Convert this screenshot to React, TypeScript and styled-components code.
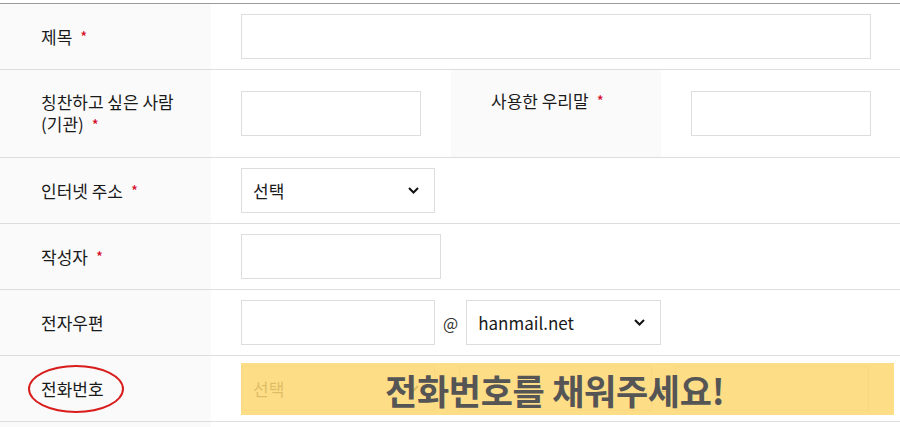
import styled, { createGlobalStyle } from "styled-components";

const GlobalStyle = createGlobalStyle`
  body {
    margin: 0;
    background: #ffffff;
    font-family: "Noto Sans CJK KR", "Noto Sans", sans-serif;
    color: #1a1a1a;
  }
`;

const Page = styled.div`
  padding-top: 3px;
  width: 900px;
  overflow: hidden;
`;

const Table = styled.div`
  border-top: 1px solid #9a9a9a;
`;

const Row = styled.div`
  display: flex;
  border-bottom: 1px solid #dddddd;
`;

const Label = styled.div<{ $w: number; $top?: boolean; $pl?: number }>`
  position: relative;
  box-sizing: border-box;
  width: ${(p) => p.$w}px;
  flex-shrink: 0;
  display: flex;
  align-items: ${(p) => (p.$top ? "flex-start" : "center")};
  padding: ${(p) => (p.$top ? "20px" : "21px")} 0 21px ${(p) => p.$pl ?? 41}px;
  background: #fafafa;
  font-size: 17px;
  line-height: 22px;
  color: #1a1a1a;
`;

const Req = styled.span`
  color: #d6001c;
  margin-left: 8px;
  font-size: 15px;
`;

const Cell = styled.div<{ $w?: number }>`
  position: relative;
  box-sizing: border-box;
  ${(p) => (p.$w ? `width: ${p.$w}px;` : "flex: 1;")}
  display: flex;
  align-items: center;
  padding: 10px 0 10px 30px;
`;

const TextInput = styled.input<{ $w: number }>`
  box-sizing: border-box;
  width: ${(p) => p.$w}px;
  height: 45px;
  border: 1px solid #dddddd;
  background: #ffffff;
  outline: none;
  padding: 0 12px;
  font-size: 16px;
`;

const SelectBox = styled.div<{ $w: number }>`
  box-sizing: border-box;
  width: ${(p) => p.$w}px;
  height: 45px;
  border: 1px solid #dddddd;
  background: #ffffff;
  display: flex;
  align-items: center;
  justify-content: space-between;
  padding: 0 15px 0 11px;
  font-size: 17px;
  color: #1a1a1a;
`;

const Sep = styled.span<{ $m: number }>`
  margin: 0 ${(p) => p.$m}px;
  font-size: 16px;
  color: #333333;
`;

const Circle = styled.div`
  position: absolute;
  left: 28px;
  top: 9px;
  width: 96px;
  height: 48px;
  box-sizing: border-box;
  border: 2px solid #d91c1c;
  border-radius: 50%;
`;

const Highlight = styled.div`
  position: absolute;
  left: 30px;
  top: 7px;
  width: 653px;
  height: 52px;
  background: rgba(254, 215, 115, 0.86);
  display: flex;
  align-items: center;
  padding-left: 144px;
  box-sizing: border-box;
`;

const Callout = styled.span`
  font-family: "Noto Sans CJK KR", sans-serif;
  font-weight: 700;
  font-size: 35px;
  color: #555555;
  letter-spacing: -0.3px;
  white-space: nowrap;
`;

const Chevron = () => (
  <svg width="11" height="7" viewBox="0 0 11 7">
    <path d="M1 1 L5.5 5.5 L10 1" fill="none" stroke="#111" strokeWidth="2" />
  </svg>
);

function Select({ w, value }: { w: number; value: string }) {
  return (
    <SelectBox $w={w}>
      <span>{value}</span>
      <Chevron />
    </SelectBox>
  );
}

export default function App() {
  return (
    <Page>
      <GlobalStyle />
      <Table>
        <Row>
          <Label $w={211}>
            제목<Req>*</Req>
          </Label>
          <Cell>
            <TextInput $w={630} />
          </Cell>
        </Row>
        <Row>
          <Label $w={211}>
            <span>
              칭찬하고 싶은 사람
              <br />
              (기관)<Req>*</Req>
            </span>
          </Label>
          <Cell $w={240}>
            <TextInput $w={180} />
          </Cell>
          <Label $w={210} $pl={40} $top>
            사용한 우리말<Req>*</Req>
          </Label>
          <Cell>
            <TextInput $w={180} />
          </Cell>
        </Row>
        <Row>
          <Label $w={211}>
            인터넷 주소<Req>*</Req>
          </Label>
          <Cell>
            <Select w={194} value="선택" />
          </Cell>
        </Row>
        <Row>
          <Label $w={211}>
            작성자<Req>*</Req>
          </Label>
          <Cell>
            <TextInput $w={200} />
          </Cell>
        </Row>
        <Row>
          <Label $w={211}>전자우편</Label>
          <Cell>
            <TextInput $w={194} />
            <Sep $m={8}>@</Sep>
            <Select w={195} value="hanmail.net" />
          </Cell>
        </Row>
        <Row>
          <Label $w={211}>
            전화번호
            <Circle />
          </Label>
          <Cell>
            <Select w={194} value="선택" />
            <Sep $m={9}>-</Sep>
            <TextInput $w={193} />
            <Sep $m={9}>-</Sep>
            <TextInput $w={194} />
            <Highlight>
              <Callout>전화번호를 채워주세요!</Callout>
            </Highlight>
          </Cell>
        </Row>
        <Row>
          <Label $w={211}>&nbsp;</Label>
          <Cell />
        </Row>
      </Table>
    </Page>
  );
}
